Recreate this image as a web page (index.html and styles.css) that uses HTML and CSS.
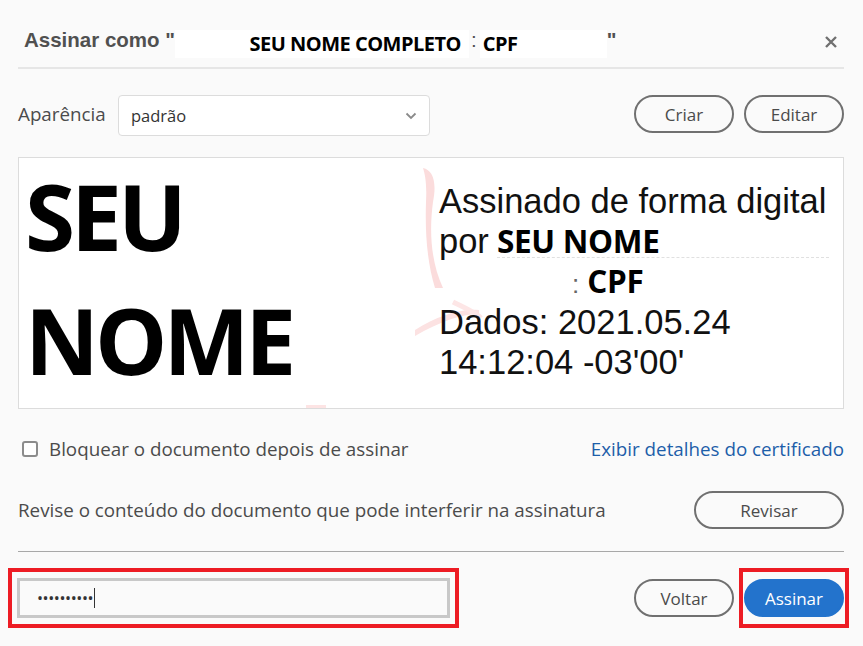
FILE: index.html
```html
<!DOCTYPE html>
<html lang="pt">
<head>
    <meta charset="UTF-8">
    <meta name="viewport" content="width=device-width, initial-scale=1.0">
    <title>Assinar documento</title>
    <link rel="stylesheet" href="styles.css">
</head>
<body>
    <div class="dialog">
        <div class="dialog-header">
            <h2 class="title">Assinar como "<span class="redact redact-name">SEU NOME COMPLETO</span><span class="sep">:</span><span class="redact redact-cpf">CPF</span>"</h2>
            <button class="close-btn" aria-label="Fechar">
                <svg width="14" height="14" viewBox="0 0 14 14">
                    <path d="M2 2 L12 12 M12 2 L2 12" stroke="#707070" stroke-width="2.4" fill="none"/>
                </svg>
            </button>
        </div>

        <div class="appearance-row">
            <label class="label">Aparência</label>
            <div class="select">
                <span>padrão</span>
                <svg width="12" height="8" viewBox="0 0 12 8">
                    <path d="M1.5 1.5 L6 6 L10.5 1.5" stroke="#8a8a8a" stroke-width="1.8" fill="none"/>
                </svg>
            </div>
            <div class="spacer"></div>
            <button class="pill-btn">Criar</button>
            <button class="pill-btn">Editar</button>
        </div>

        <div class="preview">
            <div class="big-name">
                <div>SEU</div>
                <div>NOME</div>
            </div>
            <!-- faded logo behind the signature text -->
            <svg class="watermark" width="80" height="250" viewBox="0 0 80 250">
                <path d="M10 6 C20 8 24 20 20 40 C16 70 18 100 30 126 L22 126 C14 100 12 70 13 40 C14 22 12 12 10 6 Z" fill="#fbdcdc"/>
                <path d="M2 168 C24 154 48 146 66 148 L66 152 C48 152 26 160 2 174 Z" fill="#fce2e2"/>
                <path d="M40 140 C52 146 62 150 68 156" stroke="#fde6e6" stroke-width="5" fill="none"/>
            </svg>
            <span class="mark"></span>
            <div class="sig-text">
                <div>Assinado de forma digital</div>
                <div class="sig-line">por <span class="redact-box"><b class="bold-name">SEU NOME</b></span></div>
                <div class="sig-line sig-cpf"><span class="colon">:</span> <b class="bold-name">CPF</b></div>
                <div>Dados: 2021.05.24</div>
                <div>14:12:04 -03'00'</div>
            </div>
        </div>

        <div class="option-row">
            <label class="check">
                <span class="checkbox"></span>
                Bloquear o documento depois de assinar
            </label>
            <a class="link" href="#">Exibir detalhes do certificado</a>
        </div>

        <div class="review-row">
            <span>Revise o conteúdo do documento que pode interferir na assinatura</span>
            <button class="pill-btn wide">Revisar</button>
        </div>

        <div class="footer">
            <div class="highlight">
                <div class="password">
                    <span class="dots">••••••••••</span><span class="caret"></span>
                </div>
            </div>
            <div class="spacer"></div>
            <button class="pill-btn">Voltar</button>
            <div class="highlight highlight-btn">
                <button class="pill-btn primary">Assinar</button>
            </div>
        </div>
    </div>
</body>
</html>
```

FILE: styles.css
```css
body {
    margin: 0;
    background-color: #fafafa;
    font-family: 'Open Sans', sans-serif;
    color: #4b4b4b;
}

.dialog {
    padding: 0 19px 0 18px;
}

.dialog-header {
    display: flex;
    align-items: center;
    height: 67px;
    border-bottom: 2px solid #e6e6e6;
}

.title {
    flex: 1;
    margin: 18px 0 0 6px;
    font-family: 'Liberation Sans', Arial, sans-serif;
    font-size: 20.5px;
    font-weight: bold;
    color: #505050;
    white-space: nowrap;
}

.redact {
    display: inline-block;
    background-color: #fff;
    color: #000;
    font-family: 'Open Sans', sans-serif;
    font-size: 20px;
    letter-spacing: -0.5px;
    line-height: 28px;
    vertical-align: -4px;
}

.redact-name {
    width: 294px;
    padding-right: 8px;
    box-sizing: border-box;
    text-align: right;
}

.sep {
    margin: 0 3px 0 2px;
    font-weight: normal;
}

.redact-cpf {
    width: 127px;
    padding-left: 3px;
    box-sizing: border-box;
}

.close-btn {
    background: none;
    border: none;
    padding: 0;
    margin: 16px 6px 0 0;
    width: 14px;
    height: 14px;
    cursor: pointer;
}

.appearance-row {
    display: flex;
    align-items: flex-start;
    margin-top: 26px;
    height: 41px;
}

.label {
    align-self: center;
    width: 100px;
    font-size: 18.8px;
    margin-top: -4px;
}

.select {
    display: flex;
    align-items: center;
    justify-content: space-between;
    width: 312px;
    height: 41px;
    box-sizing: border-box;
    padding: 0 12px 0 12px;
    background-color: #fff;
    border: 1px solid #dcdcdc;
    border-radius: 4px;
    font-size: 16.5px;
    color: #333;
}

.spacer {
    flex: 1;
}

.pill-btn {
    height: 38px;
    width: 100px;
    margin-left: 10px;
    box-sizing: border-box;
    background-color: #fafafa;
    border: 2.5px solid #707070;
    border-radius: 20px;
    font-family: 'Open Sans', sans-serif;
    font-size: 17px;
    color: #4b4b4b;
    cursor: pointer;
}

.pill-btn.wide {
    width: 150px;
}

.preview {
    position: relative;
    display: flex;
    margin-top: 21px;
    height: 252px;
    box-sizing: border-box;
    background-color: #fff;
    border: 1px solid #dcdcdc;
}

.big-name {
    width: 420px;
    margin-top: -4px;
    padding-left: 6px;
    font-family: 'Open Sans', sans-serif;
    font-weight: bold;
    font-size: 91px;
    line-height: 124px;
    letter-spacing: -4px;
    color: #000;
}

.watermark {
    position: absolute;
    left: 394px;
    top: 4px;
}

.mark {
    position: absolute;
    left: 287px;
    bottom: 0;
    width: 20px;
    height: 3px;
    background-color: #fde4e4;
}

.sig-text {
    position: relative;
    margin-left: -6px;
    padding-top: 24px;
    font-family: 'Liberation Sans', Arial, sans-serif;
    font-size: 34.5px;
    line-height: 39.5px;
    color: #111;
}

.sig-line {
    display: flex;
    align-items: baseline;
}

.redact-box {
    display: inline-block;
    width: 332px;
    margin-left: 8px;
    background-color: #fff;
    border-bottom: 1px dashed #e0e0e0;
    line-height: 32px;
}

.bold-name {
    font-family: 'Open Sans', sans-serif;
    font-size: 31.5px;
    letter-spacing: -0.3px;
    color: #000;
}

.sig-cpf {
    padding-left: 133px;
    height: 42px;
}

.colon {
    color: #666;
    font-size: 26px;
    margin-right: 8px;
}

.option-row {
    display: flex;
    align-items: center;
    justify-content: space-between;
    margin-top: 27px;
    height: 26px;
    font-size: 18.8px;
}

.check {
    display: flex;
    align-items: center;
    gap: 11px;
    padding-left: 4px;
}

.checkbox {
    width: 16px;
    height: 16px;
    box-sizing: border-box;
    border: 2px solid #8c8c8c;
    border-radius: 3px;
    background-color: #fff;
}

.link {
    color: #1d5ea9;
    text-decoration: none;
}

.review-row {
    display: flex;
    align-items: center;
    justify-content: space-between;
    margin-top: 29px;
    padding-bottom: 22px;
    border-bottom: 1px solid #a8a8a8;
    font-size: 18.8px;
}

.footer {
    display: flex;
    align-items: center;
    margin-top: 16px;
    margin-left: -10px;
}

.highlight {
    border: 4px solid #ed1c24;
    padding: 6px 5px;
}

.password {
    display: flex;
    align-items: center;
    width: 433px;
    height: 40px;
    box-sizing: border-box;
    padding-left: 17px;
    border: 3px solid #c8c8c8;
    background-color: #fafafa;
}

.dots {
    font-size: 16px;
    letter-spacing: -0.4px;
    color: #333;
}

.caret {
    width: 1px;
    height: 20px;
    margin-left: 1px;
    background-color: #333;
}

.highlight-btn {
    margin-left: 5px;
    margin-right: -5px;
    padding: 7px 1px;
}

.pill-btn.primary {
    margin-left: 0;
    background-color: #2373cc;
    border-color: #2373cc;
    color: #fff;
}
```
